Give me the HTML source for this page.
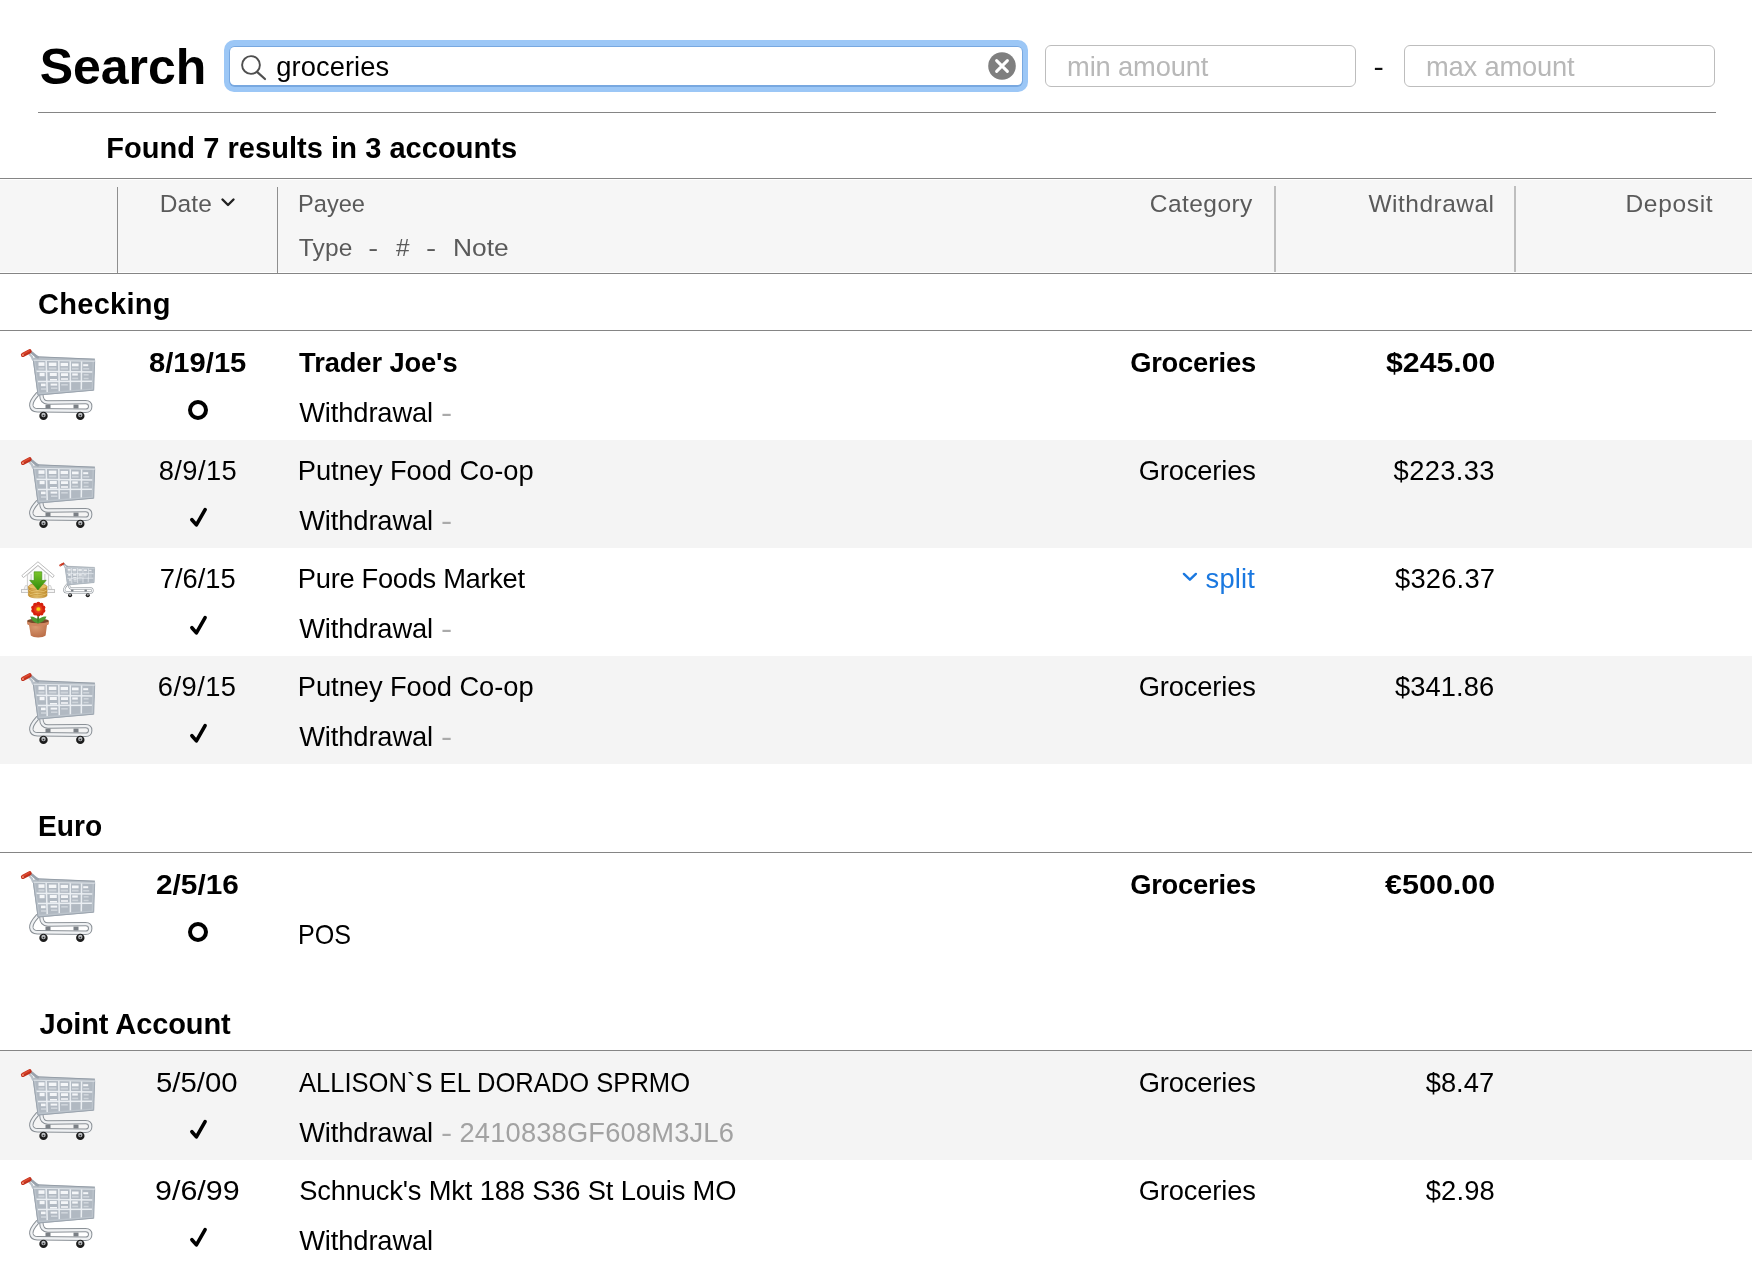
<!DOCTYPE html>
<html><head><meta charset="utf-8"><title>Search</title>
<style>
html,body{margin:0;padding:0;background:#fff;}
body{width:1752px;height:1288px;position:relative;overflow:hidden;font-family:"Liberation Sans",sans-serif;}
.t{position:absolute;white-space:pre;}
.rb{position:absolute;left:0;width:1752px;height:108px;background:#f4f4f4;}
.hl{position:absolute;background:#858585;height:1px;}
.vl{position:absolute;}
.ic{position:absolute;overflow:visible;}
#w{position:absolute;left:0;top:0;width:1752px;height:1288px;will-change:transform;}
</style></head><body><div id="w">
<div class="rb" style="top:440px;height:108px"></div>
<div class="rb" style="top:656px;height:108px"></div>
<div class="rb" style="top:1051px;height:109px"></div>

<!-- search field -->
<div style="position:absolute;left:224px;top:40px;width:804px;height:52px;border-radius:10px;background:#9cc7f6;"></div>
<div style="position:absolute;left:229px;top:45.5px;width:794px;height:41px;border-radius:6px;background:#78a8e0;"></div>
<div style="position:absolute;left:230.2px;top:46.7px;width:791.4px;height:38.7px;border-radius:4.5px;background:#fff;"></div>
<svg style="position:absolute;left:236px;top:50px" width="34" height="34" viewBox="0 0 34 34"><circle cx="15" cy="15" r="8.9" fill="none" stroke="#4f4f4f" stroke-width="1.9"/><path d="M21.6 22.4 L29 29" stroke="#4f4f4f" stroke-width="2.2" stroke-linecap="round"/></svg>
<svg style="position:absolute;left:988px;top:52px" width="28" height="28" viewBox="0 0 28 28"><circle cx="14" cy="14" r="13.8" fill="#7f7f7f"/><path d="M8.6 8.6 L19.4 19.4 M19.4 8.6 L8.6 19.4" stroke="#fff" stroke-width="3" stroke-linecap="round"/></svg>
<div style="position:absolute;left:1045px;top:45px;width:309px;height:40px;border:1px solid #bdbdbd;border-radius:6px;background:#fff;"></div>
<div style="position:absolute;left:1404px;top:45px;width:309px;height:40px;border:1px solid #bdbdbd;border-radius:6px;background:#fff;"></div>
<div class="hl" style="left:38px;top:112px;width:1678px;"></div>
<!-- table header -->
<div style="position:absolute;left:0;top:180px;width:1752px;height:92px;background:#f6f6f6;"></div>
<div class="hl" style="left:0;top:178px;width:1752px;"></div>
<div class="hl" style="left:0;top:273px;width:1752px;"></div>
<div class="vl" style="left:117px;top:186.5px;width:1px;height:86.5px;background:#8f8f8f;"></div>
<div class="vl" style="left:277px;top:186.5px;width:1px;height:86.5px;background:#8f8f8f;"></div>
<div class="vl" style="left:1274px;top:186px;width:2px;height:86px;background:#bebebe;"></div>
<div class="vl" style="left:1514px;top:186px;width:2px;height:86px;background:#bebebe;"></div>
<svg style="position:absolute;left:217.5px;top:195px" width="20" height="16" viewBox="0 0 20 16"><path d="M4.5 4.5 L10 10 L15.5 4.5" fill="none" stroke="#222" stroke-width="2.4" stroke-linecap="round" stroke-linejoin="round"/></svg>
<!-- section lines -->
<div class="hl" style="left:0;top:330px;width:1752px;"></div>
<div class="hl" style="left:0;top:852px;width:1752px;"></div>
<div class="hl" style="left:0;top:1050px;width:1752px;"></div>
<span class="t" style="left:39.82px;top:37.00px;font-size:50px;line-height:60px;letter-spacing:-0.075px;color:#000;font-weight:bold;">Search</span>
<span class="t" style="left:276.35px;top:50.00px;font-size:27.3px;line-height:33px;letter-spacing:0.066px;color:#000;">groceries</span>
<span class="t" style="left:1067.09px;top:50.00px;font-size:27.3px;line-height:33px;letter-spacing:-0.147px;color:#b8b8b8;">min amount</span>
<span class="t" style="left:1425.99px;top:50.00px;font-size:27.3px;line-height:33px;letter-spacing:-0.167px;color:#b8b8b8;">max amount</span>
<span class="t" style="left:1374.43px;top:50.00px;font-size:27.3px;line-height:33px;letter-spacing:0.000px;color:#111;transform:scaleX(1.131);">-</span>
<span class="t" style="left:106.19px;top:131.00px;font-size:29px;line-height:35px;letter-spacing:0.060px;color:#000;font-weight:bold;">Found 7 results in 3 accounts</span>
<span class="t" style="left:159.70px;top:189.00px;font-size:24.5px;line-height:29px;letter-spacing:0.125px;color:#5a5a5a;">Date</span>
<span class="t" style="left:297.87px;top:189.00px;font-size:24.5px;line-height:29px;letter-spacing:0.000px;color:#5a5a5a;transform-origin:0 0;transform:scaleX(0.9647);">Payee</span>
<span class="t" style="left:298.70px;top:233.00px;font-size:24.5px;line-height:29px;letter-spacing:0.170px;color:#5a5a5a;">Type</span>
<span class="t" style="left:368.86px;top:233.00px;font-size:24.5px;line-height:29px;letter-spacing:0.000px;color:#5a5a5a;transform:scaleX(1.213);">-</span>
<span class="t" style="left:396.15px;top:233.00px;font-size:24.5px;line-height:29px;letter-spacing:0.000px;color:#5a5a5a;transform:scaleX(0.993);">#</span>
<span class="t" style="left:426.56px;top:233.00px;font-size:24.5px;line-height:29px;letter-spacing:0.000px;color:#5a5a5a;transform:scaleX(1.246);">-</span>
<span class="t" style="left:452.65px;top:233.00px;font-size:24.5px;line-height:29px;letter-spacing:0.000px;color:#5a5a5a;transform-origin:0 0;transform:scaleX(1.0754);">Note</span>
<span class="t" style="left:1149.80px;top:189.00px;font-size:24.5px;line-height:29px;letter-spacing:0.448px;color:#5a5a5a;">Category</span>
<span class="t" style="left:1368.40px;top:189.00px;font-size:24.5px;line-height:29px;letter-spacing:0.497px;color:#5a5a5a;">Withdrawal</span>
<span class="t" style="left:1625.50px;top:189.00px;font-size:24.5px;line-height:29px;letter-spacing:0.673px;color:#5a5a5a;">Deposit</span>
<span class="t" style="left:38.09px;top:287.00px;font-size:29px;line-height:35px;letter-spacing:0.276px;color:#000;font-weight:bold;">Checking</span>
<span class="t" style="left:37.84px;top:809.00px;font-size:29px;line-height:35px;letter-spacing:0.000px;color:#000;font-weight:bold;transform-origin:0 0;transform:scaleX(0.9700);">Euro</span>
<span class="t" style="left:39.60px;top:1007.00px;font-size:29px;line-height:35px;letter-spacing:-0.091px;color:#000;font-weight:bold;">Joint Account</span>
<span class="t" style="left:148.59px;top:346.00px;font-size:27.3px;line-height:33px;letter-spacing:0.000px;color:#000;font-weight:bold;transform-origin:0 0;transform:scaleX(1.0687);">8/19/15</span>
<span class="t" style="left:299.10px;top:346.00px;font-size:27.3px;line-height:33px;letter-spacing:-0.105px;color:#000;font-weight:bold;">Trader Joe's</span>
<span class="t" style="left:299.20px;top:396.00px;font-size:27.3px;line-height:33px;letter-spacing:-0.113px;color:#000;">Withdrawal</span>
<span class="t" style="left:441.69px;top:396.00px;font-size:27.3px;line-height:33px;letter-spacing:0.000px;color:#aaaaaa;transform:scaleX(1.227);">-</span>
<span class="t" style="left:1130.15px;top:346.00px;font-size:27.3px;line-height:33px;letter-spacing:-0.190px;color:#000;font-weight:bold;">Groceries</span>
<span class="t" style="left:1385.70px;top:346.00px;font-size:27.3px;line-height:33px;letter-spacing:0.000px;color:#000;font-weight:bold;transform-origin:0 0;transform:scaleX(1.1079);">$245.00</span>
<span class="t" style="left:158.65px;top:454.00px;font-size:27.3px;line-height:33px;letter-spacing:0.432px;color:#000;">8/9/15</span>
<span class="t" style="left:297.87px;top:454.00px;font-size:27.3px;line-height:33px;letter-spacing:-0.063px;color:#000;">Putney Food Co-op</span>
<span class="t" style="left:299.20px;top:504.00px;font-size:27.3px;line-height:33px;letter-spacing:-0.113px;color:#000;">Withdrawal</span>
<span class="t" style="left:441.69px;top:504.00px;font-size:27.3px;line-height:33px;letter-spacing:0.000px;color:#aaaaaa;transform:scaleX(1.227);">-</span>
<span class="t" style="left:1138.72px;top:454.00px;font-size:27.3px;line-height:33px;letter-spacing:-0.150px;color:#000;">Groceries</span>
<span class="t" style="left:1393.60px;top:454.00px;font-size:27.3px;line-height:33px;letter-spacing:0.354px;color:#000;">$223.33</span>
<span class="t" style="left:159.72px;top:562.00px;font-size:27.3px;line-height:33px;letter-spacing:0.017px;color:#000;">7/6/15</span>
<span class="t" style="left:297.87px;top:562.00px;font-size:27.3px;line-height:33px;letter-spacing:-0.306px;color:#000;">Pure Foods Market</span>
<span class="t" style="left:299.20px;top:612.00px;font-size:27.3px;line-height:33px;letter-spacing:-0.113px;color:#000;">Withdrawal</span>
<span class="t" style="left:441.69px;top:612.00px;font-size:27.3px;line-height:33px;letter-spacing:0.000px;color:#aaaaaa;transform:scaleX(1.227);">-</span>
<span class="t" style="left:1205.57px;top:562.00px;font-size:27.3px;line-height:33px;letter-spacing:0.196px;color:#1a78e0;">split</span>
<span class="t" style="left:1395.00px;top:562.00px;font-size:27.3px;line-height:33px;letter-spacing:0.221px;color:#000;">$326.37</span>
<span class="t" style="left:157.82px;top:670.00px;font-size:27.3px;line-height:33px;letter-spacing:0.457px;color:#000;">6/9/15</span>
<span class="t" style="left:297.87px;top:670.00px;font-size:27.3px;line-height:33px;letter-spacing:-0.063px;color:#000;">Putney Food Co-op</span>
<span class="t" style="left:299.20px;top:720.00px;font-size:27.3px;line-height:33px;letter-spacing:-0.113px;color:#000;">Withdrawal</span>
<span class="t" style="left:441.69px;top:720.00px;font-size:27.3px;line-height:33px;letter-spacing:0.000px;color:#aaaaaa;transform:scaleX(1.227);">-</span>
<span class="t" style="left:1138.72px;top:670.00px;font-size:27.3px;line-height:33px;letter-spacing:-0.150px;color:#000;">Groceries</span>
<span class="t" style="left:1395.00px;top:670.00px;font-size:27.3px;line-height:33px;letter-spacing:0.071px;color:#000;">$341.86</span>
<span class="t" style="left:155.97px;top:868.00px;font-size:27.3px;line-height:33px;letter-spacing:0.000px;color:#000;font-weight:bold;transform-origin:0 0;transform:scaleX(1.0905);">2/5/16</span>
<span class="t" style="left:297.54px;top:918.00px;font-size:27.3px;line-height:33px;letter-spacing:0.000px;color:#000;transform-origin:0 0;transform:scaleX(0.9196);">POS</span>
<span class="t" style="left:1130.15px;top:868.00px;font-size:27.3px;line-height:33px;letter-spacing:-0.190px;color:#000;font-weight:bold;">Groceries</span>
<span class="t" style="left:1385.20px;top:868.00px;font-size:27.3px;line-height:33px;letter-spacing:0.000px;color:#000;font-weight:bold;transform-origin:0 0;transform:scaleX(1.1171);">€500.00</span>
<span class="t" style="left:155.58px;top:1066.00px;font-size:27.3px;line-height:33px;letter-spacing:0.000px;color:#000;transform-origin:0 0;transform:scaleX(1.0757);">5/5/00</span>
<span class="t" style="left:299.40px;top:1066.00px;font-size:27.3px;line-height:33px;letter-spacing:0.000px;color:#000;transform-origin:0 0;transform:scaleX(0.9363);">ALLISON`S EL DORADO SPRMO</span>
<span class="t" style="left:299.20px;top:1116.00px;font-size:27.3px;line-height:33px;letter-spacing:-0.113px;color:#000;">Withdrawal</span>
<span class="t" style="left:459.52px;top:1116.00px;font-size:27.3px;line-height:33px;letter-spacing:0.169px;color:#a2a2a2;">2410838GF608M3JL6</span>
<span class="t" style="left:441.69px;top:1116.00px;font-size:27.3px;line-height:33px;letter-spacing:0.000px;color:#aaaaaa;transform:scaleX(1.227);">-</span>
<span class="t" style="left:1138.72px;top:1066.00px;font-size:27.3px;line-height:33px;letter-spacing:-0.150px;color:#000;">Groceries</span>
<span class="t" style="left:1425.70px;top:1066.00px;font-size:27.3px;line-height:33px;letter-spacing:0.022px;color:#000;">$8.47</span>
<span class="t" style="left:155.07px;top:1174.00px;font-size:27.3px;line-height:33px;letter-spacing:0.000px;color:#000;transform-origin:0 0;transform:scaleX(1.1154);">9/6/99</span>
<span class="t" style="left:299.15px;top:1174.00px;font-size:27.3px;line-height:33px;letter-spacing:-0.152px;color:#000;">Schnuck's Mkt 188 S36 St Louis MO</span>
<span class="t" style="left:299.20px;top:1224.00px;font-size:27.3px;line-height:33px;letter-spacing:-0.113px;color:#000;">Withdrawal</span>
<span class="t" style="left:1138.72px;top:1174.00px;font-size:27.3px;line-height:33px;letter-spacing:-0.150px;color:#000;">Groceries</span>
<span class="t" style="left:1425.70px;top:1174.00px;font-size:27.3px;line-height:33px;letter-spacing:0.172px;color:#000;">$2.98</span>
<svg class="ic" style="left:186px;top:398.3px" width="24" height="24" viewBox="0 0 24 24"><circle cx="12" cy="12" r="8" fill="none" stroke="#000" stroke-width="4"/></svg>
<svg class="ic" style="left:186px;top:504px" width="24" height="26" viewBox="0 0 24 26"><path d="M5.9 15.7 L10.4 20.9 L19.1 5.6" fill="none" stroke="#000" stroke-width="3.6" stroke-linecap="round" stroke-linejoin="round"/></svg>
<svg class="ic" style="left:186px;top:612px" width="24" height="26" viewBox="0 0 24 26"><path d="M5.9 15.7 L10.4 20.9 L19.1 5.6" fill="none" stroke="#000" stroke-width="3.6" stroke-linecap="round" stroke-linejoin="round"/></svg>
<svg class="ic" style="left:1178px;top:568px" width="24" height="16" viewBox="0 0 24 16"><path d="M5.9 5.9 L11.9 11.7 L17.9 5.9" fill="none" stroke="#1a78e0" stroke-width="2.4" stroke-linecap="round" stroke-linejoin="round"/></svg>
<svg class="ic" style="left:186px;top:720px" width="24" height="26" viewBox="0 0 24 26"><path d="M5.9 15.7 L10.4 20.9 L19.1 5.6" fill="none" stroke="#000" stroke-width="3.6" stroke-linecap="round" stroke-linejoin="round"/></svg>
<svg class="ic" style="left:186px;top:920.3px" width="24" height="24" viewBox="0 0 24 24"><circle cx="12" cy="12" r="8" fill="none" stroke="#000" stroke-width="4"/></svg>
<svg class="ic" style="left:186px;top:1116px" width="24" height="26" viewBox="0 0 24 26"><path d="M5.9 15.7 L10.4 20.9 L19.1 5.6" fill="none" stroke="#000" stroke-width="3.6" stroke-linecap="round" stroke-linejoin="round"/></svg>
<svg class="ic" style="left:186px;top:1224px" width="24" height="26" viewBox="0 0 24 26"><path d="M5.9 15.7 L10.4 20.9 L19.1 5.6" fill="none" stroke="#000" stroke-width="3.6" stroke-linecap="round" stroke-linejoin="round"/></svg>
<svg class="ic" style="left:10px;top:340px" width="100" height="90" viewBox="0 0 100 90" preserveAspectRatio="none">
  <!-- lower frame tube -->
  <path d="M27.6 54 C23.4 58.5 21 62 21.3 65.4 C21.7 69 24 70.1 27.4 70.2 L75.6 70.7 C79 70.7 80.2 68.8 80.2 66.4 C80.2 63.9 78.7 62.1 75.6 62.1 L38 62.5 C33.6 62.5 31.4 60 31.3 54.5" fill="none" stroke="#8a9096" stroke-width="4.4" stroke-linecap="round" stroke-linejoin="round"/>
  <path d="M27.6 54 C23.4 58.5 21 62 21.3 65.4 C21.7 69 24 70.1 27.4 70.2 L75.6 70.7 C79 70.7 80.2 68.8 80.2 66.4 C80.2 63.9 78.7 62.1 75.6 62.1 L38 62.5 C33.6 62.5 31.4 60 31.3 54.5" fill="none" stroke="#eff1f3" stroke-width="2.4" stroke-linecap="round" stroke-linejoin="round"/>
  <rect x="35.5" y="64.6" width="5" height="3.8" fill="#7b8086"/>
  <rect x="63.5" y="64.6" width="5" height="3.8" fill="#7b8086"/>
  <!-- wheels -->
  <circle cx="33.5" cy="75.9" r="4.2" fill="#1c1c1c"/>
  <circle cx="33.5" cy="75" r="2.2" fill="#b9bcc0"/>
  <circle cx="33.5" cy="75.6" r="0.9" fill="#333"/>
  <circle cx="70.3" cy="75.9" r="4.2" fill="#1c1c1c"/>
  <circle cx="70.3" cy="75" r="2.2" fill="#b9bcc0"/>
  <circle cx="70.3" cy="75.6" r="0.9" fill="#333"/>
  <!-- basket body -->
  <path d="M22.6 18.5 L84.9 20.2 L83.6 50.4 L27.8 55.4 Z" fill="#b1b9c2"/>
  <!-- cell highlights -->
  <g fill="#f4f6f8">
   <rect x="28.5" y="22.3" width="6" height="3.6"/><rect x="38.8" y="22.6" width="7.6" height="3.4"/><rect x="50.6" y="22.9" width="7.4" height="3.2"/><rect x="62" y="23.5" width="6.6" height="2.8"/><rect x="73.2" y="24.2" width="5" height="2"/>
   <rect x="29.6" y="32.8" width="5" height="3.4"/><rect x="39.8" y="33" width="7" height="3"/><rect x="51" y="33.2" width="7" height="2.8"/><rect x="62.2" y="33.4" width="5.6" height="2.2"/>
   <rect x="40" y="39" width="7" height="1.6"/><rect x="51" y="38.2" width="7" height="1.6"/>
   <rect x="31" y="43.6" width="4.6" height="2.6"/><rect x="40.6" y="43.6" width="6.6" height="2"/>
  </g>
  <g fill="#cfd5db">
   <rect x="28.5" y="27.4" width="6" height="2"/><rect x="38.8" y="27.4" width="7.6" height="2"/><rect x="50.6" y="27.6" width="7.4" height="2"/><rect x="62" y="27.8" width="6.6" height="1.8"/><rect x="73.2" y="28" width="6" height="1.6"/>
   <rect x="62.2" y="37.6" width="6" height="1.6"/><rect x="73.6" y="34" width="5" height="1.6"/><rect x="73.6" y="37.8" width="5" height="1.4"/>
   <rect x="51.2" y="44" width="6.6" height="1.6"/><rect x="31" y="48.2" width="5" height="1.6"/><rect x="41" y="47.4" width="6.4" height="1.6"/>
  </g>
  <!-- grid lines -->
  <g stroke="#eaeef2" stroke-width="1.5" fill="none">
   <path d="M36.1 19.5 L37.3 54"/><path d="M48.8 19.8 L49.3 53"/><path d="M60.3 20.1 L60.4 52"/><path d="M71.6 20.4 L71.3 51"/>
   <path d="M24.6 31.2 L84.2 32"/><path d="M26 41.6 L83.8 41.2"/>
  </g>
  <!-- basket border -->
  <path d="M24.2 20.5 L28.6 53.8 L82.6 49.4 L83.6 21.6" fill="none" stroke="#bcc4cc" stroke-width="2"/>
  <path d="M23.2 19 L28 55 L83.4 50.2" fill="none" stroke="#9aa3ad" stroke-width="1"/>
  <path d="M84.6 20.5 L83.6 50.4" fill="none" stroke="#a4adb7" stroke-width="1.2"/>
  <!-- top rim -->
  <path d="M27.6 16.4 L84.9 18.8 L84.9 21.4 L23.2 20.6 L22.6 18.2 Z" fill="#b5bdc5"/>
  <path d="M27.6 16.8 L84.9 19.2" stroke="#9099a3" stroke-width="0.9" fill="none"/>
  <path d="M23.4 20.3 L84.6 21.2" stroke="#dfe4e9" stroke-width="1.1" fill="none"/>
  <!-- handle connector -->
  <path d="M20.6 12 C23.5 13.2 24.6 16 27.8 17.2" fill="none" stroke="#9aa3ad" stroke-width="2.6" stroke-linecap="round"/>
  <path d="M19.6 14.4 C21.6 15.6 22.4 17.6 23 19.6" fill="none" stroke="#b8c0c8" stroke-width="2.2" stroke-linecap="round"/>
  <!-- red handle -->
  <path d="M13 14.9 L19.6 11.3" stroke="#c0301c" stroke-width="4.2" stroke-linecap="round" fill="none"/>
  <path d="M13.2 13.9 L19.2 10.7" stroke="#dc4a30" stroke-width="1.6" stroke-linecap="round" fill="none"/>
  <circle cx="12.9" cy="15" r="1.1" fill="#f08a70"/>
</svg>
<svg class="ic" style="left:10px;top:448px" width="100" height="90" viewBox="0 0 100 90" preserveAspectRatio="none">
  <!-- lower frame tube -->
  <path d="M27.6 54 C23.4 58.5 21 62 21.3 65.4 C21.7 69 24 70.1 27.4 70.2 L75.6 70.7 C79 70.7 80.2 68.8 80.2 66.4 C80.2 63.9 78.7 62.1 75.6 62.1 L38 62.5 C33.6 62.5 31.4 60 31.3 54.5" fill="none" stroke="#8a9096" stroke-width="4.4" stroke-linecap="round" stroke-linejoin="round"/>
  <path d="M27.6 54 C23.4 58.5 21 62 21.3 65.4 C21.7 69 24 70.1 27.4 70.2 L75.6 70.7 C79 70.7 80.2 68.8 80.2 66.4 C80.2 63.9 78.7 62.1 75.6 62.1 L38 62.5 C33.6 62.5 31.4 60 31.3 54.5" fill="none" stroke="#eff1f3" stroke-width="2.4" stroke-linecap="round" stroke-linejoin="round"/>
  <rect x="35.5" y="64.6" width="5" height="3.8" fill="#7b8086"/>
  <rect x="63.5" y="64.6" width="5" height="3.8" fill="#7b8086"/>
  <!-- wheels -->
  <circle cx="33.5" cy="75.9" r="4.2" fill="#1c1c1c"/>
  <circle cx="33.5" cy="75" r="2.2" fill="#b9bcc0"/>
  <circle cx="33.5" cy="75.6" r="0.9" fill="#333"/>
  <circle cx="70.3" cy="75.9" r="4.2" fill="#1c1c1c"/>
  <circle cx="70.3" cy="75" r="2.2" fill="#b9bcc0"/>
  <circle cx="70.3" cy="75.6" r="0.9" fill="#333"/>
  <!-- basket body -->
  <path d="M22.6 18.5 L84.9 20.2 L83.6 50.4 L27.8 55.4 Z" fill="#b1b9c2"/>
  <!-- cell highlights -->
  <g fill="#f4f6f8">
   <rect x="28.5" y="22.3" width="6" height="3.6"/><rect x="38.8" y="22.6" width="7.6" height="3.4"/><rect x="50.6" y="22.9" width="7.4" height="3.2"/><rect x="62" y="23.5" width="6.6" height="2.8"/><rect x="73.2" y="24.2" width="5" height="2"/>
   <rect x="29.6" y="32.8" width="5" height="3.4"/><rect x="39.8" y="33" width="7" height="3"/><rect x="51" y="33.2" width="7" height="2.8"/><rect x="62.2" y="33.4" width="5.6" height="2.2"/>
   <rect x="40" y="39" width="7" height="1.6"/><rect x="51" y="38.2" width="7" height="1.6"/>
   <rect x="31" y="43.6" width="4.6" height="2.6"/><rect x="40.6" y="43.6" width="6.6" height="2"/>
  </g>
  <g fill="#cfd5db">
   <rect x="28.5" y="27.4" width="6" height="2"/><rect x="38.8" y="27.4" width="7.6" height="2"/><rect x="50.6" y="27.6" width="7.4" height="2"/><rect x="62" y="27.8" width="6.6" height="1.8"/><rect x="73.2" y="28" width="6" height="1.6"/>
   <rect x="62.2" y="37.6" width="6" height="1.6"/><rect x="73.6" y="34" width="5" height="1.6"/><rect x="73.6" y="37.8" width="5" height="1.4"/>
   <rect x="51.2" y="44" width="6.6" height="1.6"/><rect x="31" y="48.2" width="5" height="1.6"/><rect x="41" y="47.4" width="6.4" height="1.6"/>
  </g>
  <!-- grid lines -->
  <g stroke="#eaeef2" stroke-width="1.5" fill="none">
   <path d="M36.1 19.5 L37.3 54"/><path d="M48.8 19.8 L49.3 53"/><path d="M60.3 20.1 L60.4 52"/><path d="M71.6 20.4 L71.3 51"/>
   <path d="M24.6 31.2 L84.2 32"/><path d="M26 41.6 L83.8 41.2"/>
  </g>
  <!-- basket border -->
  <path d="M24.2 20.5 L28.6 53.8 L82.6 49.4 L83.6 21.6" fill="none" stroke="#bcc4cc" stroke-width="2"/>
  <path d="M23.2 19 L28 55 L83.4 50.2" fill="none" stroke="#9aa3ad" stroke-width="1"/>
  <path d="M84.6 20.5 L83.6 50.4" fill="none" stroke="#a4adb7" stroke-width="1.2"/>
  <!-- top rim -->
  <path d="M27.6 16.4 L84.9 18.8 L84.9 21.4 L23.2 20.6 L22.6 18.2 Z" fill="#b5bdc5"/>
  <path d="M27.6 16.8 L84.9 19.2" stroke="#9099a3" stroke-width="0.9" fill="none"/>
  <path d="M23.4 20.3 L84.6 21.2" stroke="#dfe4e9" stroke-width="1.1" fill="none"/>
  <!-- handle connector -->
  <path d="M20.6 12 C23.5 13.2 24.6 16 27.8 17.2" fill="none" stroke="#9aa3ad" stroke-width="2.6" stroke-linecap="round"/>
  <path d="M19.6 14.4 C21.6 15.6 22.4 17.6 23 19.6" fill="none" stroke="#b8c0c8" stroke-width="2.2" stroke-linecap="round"/>
  <!-- red handle -->
  <path d="M13 14.9 L19.6 11.3" stroke="#c0301c" stroke-width="4.2" stroke-linecap="round" fill="none"/>
  <path d="M13.2 13.9 L19.2 10.7" stroke="#dc4a30" stroke-width="1.6" stroke-linecap="round" fill="none"/>
  <circle cx="12.9" cy="15" r="1.1" fill="#f08a70"/>
</svg>

<svg class="ic" style="left:10px;top:555px" width="100" height="90" viewBox="0 0 100 90">
  <defs>
    <linearGradient id="ga" x1="0" y1="0" x2="0" y2="1"><stop offset="0" stop-color="#7cc62a"/><stop offset="1" stop-color="#2f8a0c"/></linearGradient>
    <linearGradient id="gc" x1="0" y1="0" x2="1" y2="0"><stop offset="0" stop-color="#c8922e"/><stop offset="0.45" stop-color="#f0d58a"/><stop offset="1" stop-color="#c08a2a"/></linearGradient>
    <radialGradient id="gp" cx="0.4" cy="0.35" r="0.8"><stop offset="0" stop-color="#d99a72"/><stop offset="1" stop-color="#b5653f"/></radialGradient>
  </defs>
  <!-- house body -->
  <path d="M17.4 20 L27.95 10.5 L38.6 20 L38.6 35 L17.4 35 Z" fill="#fbfbfb" stroke="#c9c9c9" stroke-width="0.9"/>
  <rect x="20.4" y="19" width="1.6" height="12" fill="#dcdcdc"/><rect x="34" y="19" width="1.6" height="12" fill="#dcdcdc"/>
  <!-- steps/base -->
  <path d="M14 34.4 L15.4 30.6 L17.4 30.6 L17.4 34.4 Z M42 34.4 L40.6 30.6 L38.6 30.6 L38.6 34.4 Z" fill="#f4f4f4" stroke="#c4c4c4" stroke-width="0.7"/>
  <rect x="11.6" y="34.4" width="32.8" height="3.2" fill="#f6f6f6" stroke="#b9b9b9" stroke-width="0.8"/>
  <!-- roof -->
  <path d="M11.8 20.6 L27.95 6.8 L44.2 20.6 L42.6 22.6 L27.95 10.4 L13.4 22.6 Z" fill="#ffffff" stroke="#b4b4b4" stroke-width="0.9" stroke-linejoin="round"/>
  <!-- coins -->
  <g stroke="#b98526" stroke-width="0.6">
   <path d="M18.4 38.6 L18.4 40.4 A9.3 2.6 0 0 0 37 40.4 L37 38.6 Z" fill="url(#gc)"/>
   <ellipse cx="27.7" cy="38.6" rx="9.3" ry="2.6" fill="#e9c672"/>
   <path d="M18.4 35.2 L18.4 37 A9.3 2.6 0 0 0 37 37 L37 35.2 Z" fill="url(#gc)"/>
   <ellipse cx="27.7" cy="35.2" rx="9.3" ry="2.6" fill="#e9c672"/>
   <path d="M18.4 31.6 L18.4 33.4 A9.3 2.8 0 0 0 37 33.4 L37 31.6 Z" fill="url(#gc)"/>
   <ellipse cx="27.7" cy="31.6" rx="9.3" ry="2.8" fill="#e6bf64"/>
  </g>
  <!-- arrow -->
  <path d="M24.1 16.8 L31.8 16.8 L31.8 25.6 L36.2 25.2 L27.95 35 L19.7 25.2 L24.1 25.6 Z" fill="url(#ga)" stroke="#3a8c12" stroke-width="0.6" stroke-linejoin="round"/>
  <!-- flower pot -->
  <path d="M17.2 66 L38.8 66 L38.4 69.4 L37 70 L35.6 80.6 C33 83.2 23.4 83.2 20.8 80.6 L19 70 L17.6 69.4 Z" fill="url(#gp)"/>
  <ellipse cx="28" cy="66" rx="10.9" ry="2.6" fill="#7a4a2c"/>
  <path d="M17.1 66 A10.9 2.6 0 0 0 38.9 66 L38.5 69 A10.6 2.6 0 0 1 17.5 69 Z" fill="#cf8660"/>
  <!-- leaves -->
  <path d="M28 68.6 C24 67.6 21 65 20.4 61.6 C24 61.6 27 63.4 28 66 C29 63.4 32.4 61.4 36.4 61.6 C35.6 65 32 67.8 28 68.6 Z" fill="#4c9a32"/>
  <path d="M28 68.4 C26.8 66 27 63 28.2 60.8 C29.6 63 29.4 66 28 68.4 Z" fill="#3c8426"/>
  <rect x="27.6" y="58" width="1" height="6" fill="#3c8426"/>
  <!-- flower -->
  <g fill="#d6200c">
   <circle cx="28.3" cy="54.2" r="6"/>
   <circle cx="28.3" cy="48.9" r="2.1"/><circle cx="31.4" cy="49.9" r="2.1"/><circle cx="33.3" cy="52.6" r="2.1"/><circle cx="33.3" cy="55.8" r="2.1"/><circle cx="31.4" cy="58.5" r="2.1"/>
   <circle cx="28.3" cy="59.5" r="2.1"/><circle cx="25.2" cy="58.5" r="2.1"/><circle cx="23.3" cy="55.8" r="2.1"/><circle cx="23.3" cy="52.6" r="2.1"/><circle cx="25.2" cy="49.9" r="2.1"/>
  </g>
  <circle cx="28.3" cy="54.2" r="4.3" fill="#e4351a"/>
  <circle cx="28.4" cy="54.2" r="2.4" fill="#e88a10"/>
  <circle cx="28.4" cy="54.1" r="1.7" fill="#fad414"/>
</svg>

<svg class="ic" style="left:54.45px;top:557.8px" width="48" height="44.1" viewBox="0 0 100 90" preserveAspectRatio="none">
  <!-- lower frame tube -->
  <path d="M27.6 54 C23.4 58.5 21 62 21.3 65.4 C21.7 69 24 70.1 27.4 70.2 L75.6 70.7 C79 70.7 80.2 68.8 80.2 66.4 C80.2 63.9 78.7 62.1 75.6 62.1 L38 62.5 C33.6 62.5 31.4 60 31.3 54.5" fill="none" stroke="#8a9096" stroke-width="4.4" stroke-linecap="round" stroke-linejoin="round"/>
  <path d="M27.6 54 C23.4 58.5 21 62 21.3 65.4 C21.7 69 24 70.1 27.4 70.2 L75.6 70.7 C79 70.7 80.2 68.8 80.2 66.4 C80.2 63.9 78.7 62.1 75.6 62.1 L38 62.5 C33.6 62.5 31.4 60 31.3 54.5" fill="none" stroke="#eff1f3" stroke-width="2.4" stroke-linecap="round" stroke-linejoin="round"/>
  <rect x="35.5" y="64.6" width="5" height="3.8" fill="#7b8086"/>
  <rect x="63.5" y="64.6" width="5" height="3.8" fill="#7b8086"/>
  <!-- wheels -->
  <circle cx="33.5" cy="75.9" r="4.2" fill="#1c1c1c"/>
  <circle cx="33.5" cy="75" r="2.2" fill="#b9bcc0"/>
  <circle cx="33.5" cy="75.6" r="0.9" fill="#333"/>
  <circle cx="70.3" cy="75.9" r="4.2" fill="#1c1c1c"/>
  <circle cx="70.3" cy="75" r="2.2" fill="#b9bcc0"/>
  <circle cx="70.3" cy="75.6" r="0.9" fill="#333"/>
  <!-- basket body -->
  <path d="M22.6 18.5 L84.9 20.2 L83.6 50.4 L27.8 55.4 Z" fill="#b1b9c2"/>
  <!-- cell highlights -->
  <g fill="#f4f6f8">
   <rect x="28.5" y="22.3" width="6" height="3.6"/><rect x="38.8" y="22.6" width="7.6" height="3.4"/><rect x="50.6" y="22.9" width="7.4" height="3.2"/><rect x="62" y="23.5" width="6.6" height="2.8"/><rect x="73.2" y="24.2" width="5" height="2"/>
   <rect x="29.6" y="32.8" width="5" height="3.4"/><rect x="39.8" y="33" width="7" height="3"/><rect x="51" y="33.2" width="7" height="2.8"/><rect x="62.2" y="33.4" width="5.6" height="2.2"/>
   <rect x="40" y="39" width="7" height="1.6"/><rect x="51" y="38.2" width="7" height="1.6"/>
   <rect x="31" y="43.6" width="4.6" height="2.6"/><rect x="40.6" y="43.6" width="6.6" height="2"/>
  </g>
  <g fill="#cfd5db">
   <rect x="28.5" y="27.4" width="6" height="2"/><rect x="38.8" y="27.4" width="7.6" height="2"/><rect x="50.6" y="27.6" width="7.4" height="2"/><rect x="62" y="27.8" width="6.6" height="1.8"/><rect x="73.2" y="28" width="6" height="1.6"/>
   <rect x="62.2" y="37.6" width="6" height="1.6"/><rect x="73.6" y="34" width="5" height="1.6"/><rect x="73.6" y="37.8" width="5" height="1.4"/>
   <rect x="51.2" y="44" width="6.6" height="1.6"/><rect x="31" y="48.2" width="5" height="1.6"/><rect x="41" y="47.4" width="6.4" height="1.6"/>
  </g>
  <!-- grid lines -->
  <g stroke="#eaeef2" stroke-width="1.5" fill="none">
   <path d="M36.1 19.5 L37.3 54"/><path d="M48.8 19.8 L49.3 53"/><path d="M60.3 20.1 L60.4 52"/><path d="M71.6 20.4 L71.3 51"/>
   <path d="M24.6 31.2 L84.2 32"/><path d="M26 41.6 L83.8 41.2"/>
  </g>
  <!-- basket border -->
  <path d="M24.2 20.5 L28.6 53.8 L82.6 49.4 L83.6 21.6" fill="none" stroke="#bcc4cc" stroke-width="2"/>
  <path d="M23.2 19 L28 55 L83.4 50.2" fill="none" stroke="#9aa3ad" stroke-width="1"/>
  <path d="M84.6 20.5 L83.6 50.4" fill="none" stroke="#a4adb7" stroke-width="1.2"/>
  <!-- top rim -->
  <path d="M27.6 16.4 L84.9 18.8 L84.9 21.4 L23.2 20.6 L22.6 18.2 Z" fill="#b5bdc5"/>
  <path d="M27.6 16.8 L84.9 19.2" stroke="#9099a3" stroke-width="0.9" fill="none"/>
  <path d="M23.4 20.3 L84.6 21.2" stroke="#dfe4e9" stroke-width="1.1" fill="none"/>
  <!-- handle connector -->
  <path d="M20.6 12 C23.5 13.2 24.6 16 27.8 17.2" fill="none" stroke="#9aa3ad" stroke-width="2.6" stroke-linecap="round"/>
  <path d="M19.6 14.4 C21.6 15.6 22.4 17.6 23 19.6" fill="none" stroke="#b8c0c8" stroke-width="2.2" stroke-linecap="round"/>
  <!-- red handle -->
  <path d="M13 14.9 L19.6 11.3" stroke="#c0301c" stroke-width="4.2" stroke-linecap="round" fill="none"/>
  <path d="M13.2 13.9 L19.2 10.7" stroke="#dc4a30" stroke-width="1.6" stroke-linecap="round" fill="none"/>
  <circle cx="12.9" cy="15" r="1.1" fill="#f08a70"/>
</svg>
<svg class="ic" style="left:10px;top:664px" width="100" height="90" viewBox="0 0 100 90" preserveAspectRatio="none">
  <!-- lower frame tube -->
  <path d="M27.6 54 C23.4 58.5 21 62 21.3 65.4 C21.7 69 24 70.1 27.4 70.2 L75.6 70.7 C79 70.7 80.2 68.8 80.2 66.4 C80.2 63.9 78.7 62.1 75.6 62.1 L38 62.5 C33.6 62.5 31.4 60 31.3 54.5" fill="none" stroke="#8a9096" stroke-width="4.4" stroke-linecap="round" stroke-linejoin="round"/>
  <path d="M27.6 54 C23.4 58.5 21 62 21.3 65.4 C21.7 69 24 70.1 27.4 70.2 L75.6 70.7 C79 70.7 80.2 68.8 80.2 66.4 C80.2 63.9 78.7 62.1 75.6 62.1 L38 62.5 C33.6 62.5 31.4 60 31.3 54.5" fill="none" stroke="#eff1f3" stroke-width="2.4" stroke-linecap="round" stroke-linejoin="round"/>
  <rect x="35.5" y="64.6" width="5" height="3.8" fill="#7b8086"/>
  <rect x="63.5" y="64.6" width="5" height="3.8" fill="#7b8086"/>
  <!-- wheels -->
  <circle cx="33.5" cy="75.9" r="4.2" fill="#1c1c1c"/>
  <circle cx="33.5" cy="75" r="2.2" fill="#b9bcc0"/>
  <circle cx="33.5" cy="75.6" r="0.9" fill="#333"/>
  <circle cx="70.3" cy="75.9" r="4.2" fill="#1c1c1c"/>
  <circle cx="70.3" cy="75" r="2.2" fill="#b9bcc0"/>
  <circle cx="70.3" cy="75.6" r="0.9" fill="#333"/>
  <!-- basket body -->
  <path d="M22.6 18.5 L84.9 20.2 L83.6 50.4 L27.8 55.4 Z" fill="#b1b9c2"/>
  <!-- cell highlights -->
  <g fill="#f4f6f8">
   <rect x="28.5" y="22.3" width="6" height="3.6"/><rect x="38.8" y="22.6" width="7.6" height="3.4"/><rect x="50.6" y="22.9" width="7.4" height="3.2"/><rect x="62" y="23.5" width="6.6" height="2.8"/><rect x="73.2" y="24.2" width="5" height="2"/>
   <rect x="29.6" y="32.8" width="5" height="3.4"/><rect x="39.8" y="33" width="7" height="3"/><rect x="51" y="33.2" width="7" height="2.8"/><rect x="62.2" y="33.4" width="5.6" height="2.2"/>
   <rect x="40" y="39" width="7" height="1.6"/><rect x="51" y="38.2" width="7" height="1.6"/>
   <rect x="31" y="43.6" width="4.6" height="2.6"/><rect x="40.6" y="43.6" width="6.6" height="2"/>
  </g>
  <g fill="#cfd5db">
   <rect x="28.5" y="27.4" width="6" height="2"/><rect x="38.8" y="27.4" width="7.6" height="2"/><rect x="50.6" y="27.6" width="7.4" height="2"/><rect x="62" y="27.8" width="6.6" height="1.8"/><rect x="73.2" y="28" width="6" height="1.6"/>
   <rect x="62.2" y="37.6" width="6" height="1.6"/><rect x="73.6" y="34" width="5" height="1.6"/><rect x="73.6" y="37.8" width="5" height="1.4"/>
   <rect x="51.2" y="44" width="6.6" height="1.6"/><rect x="31" y="48.2" width="5" height="1.6"/><rect x="41" y="47.4" width="6.4" height="1.6"/>
  </g>
  <!-- grid lines -->
  <g stroke="#eaeef2" stroke-width="1.5" fill="none">
   <path d="M36.1 19.5 L37.3 54"/><path d="M48.8 19.8 L49.3 53"/><path d="M60.3 20.1 L60.4 52"/><path d="M71.6 20.4 L71.3 51"/>
   <path d="M24.6 31.2 L84.2 32"/><path d="M26 41.6 L83.8 41.2"/>
  </g>
  <!-- basket border -->
  <path d="M24.2 20.5 L28.6 53.8 L82.6 49.4 L83.6 21.6" fill="none" stroke="#bcc4cc" stroke-width="2"/>
  <path d="M23.2 19 L28 55 L83.4 50.2" fill="none" stroke="#9aa3ad" stroke-width="1"/>
  <path d="M84.6 20.5 L83.6 50.4" fill="none" stroke="#a4adb7" stroke-width="1.2"/>
  <!-- top rim -->
  <path d="M27.6 16.4 L84.9 18.8 L84.9 21.4 L23.2 20.6 L22.6 18.2 Z" fill="#b5bdc5"/>
  <path d="M27.6 16.8 L84.9 19.2" stroke="#9099a3" stroke-width="0.9" fill="none"/>
  <path d="M23.4 20.3 L84.6 21.2" stroke="#dfe4e9" stroke-width="1.1" fill="none"/>
  <!-- handle connector -->
  <path d="M20.6 12 C23.5 13.2 24.6 16 27.8 17.2" fill="none" stroke="#9aa3ad" stroke-width="2.6" stroke-linecap="round"/>
  <path d="M19.6 14.4 C21.6 15.6 22.4 17.6 23 19.6" fill="none" stroke="#b8c0c8" stroke-width="2.2" stroke-linecap="round"/>
  <!-- red handle -->
  <path d="M13 14.9 L19.6 11.3" stroke="#c0301c" stroke-width="4.2" stroke-linecap="round" fill="none"/>
  <path d="M13.2 13.9 L19.2 10.7" stroke="#dc4a30" stroke-width="1.6" stroke-linecap="round" fill="none"/>
  <circle cx="12.9" cy="15" r="1.1" fill="#f08a70"/>
</svg>
<svg class="ic" style="left:10px;top:862px" width="100" height="90" viewBox="0 0 100 90" preserveAspectRatio="none">
  <!-- lower frame tube -->
  <path d="M27.6 54 C23.4 58.5 21 62 21.3 65.4 C21.7 69 24 70.1 27.4 70.2 L75.6 70.7 C79 70.7 80.2 68.8 80.2 66.4 C80.2 63.9 78.7 62.1 75.6 62.1 L38 62.5 C33.6 62.5 31.4 60 31.3 54.5" fill="none" stroke="#8a9096" stroke-width="4.4" stroke-linecap="round" stroke-linejoin="round"/>
  <path d="M27.6 54 C23.4 58.5 21 62 21.3 65.4 C21.7 69 24 70.1 27.4 70.2 L75.6 70.7 C79 70.7 80.2 68.8 80.2 66.4 C80.2 63.9 78.7 62.1 75.6 62.1 L38 62.5 C33.6 62.5 31.4 60 31.3 54.5" fill="none" stroke="#eff1f3" stroke-width="2.4" stroke-linecap="round" stroke-linejoin="round"/>
  <rect x="35.5" y="64.6" width="5" height="3.8" fill="#7b8086"/>
  <rect x="63.5" y="64.6" width="5" height="3.8" fill="#7b8086"/>
  <!-- wheels -->
  <circle cx="33.5" cy="75.9" r="4.2" fill="#1c1c1c"/>
  <circle cx="33.5" cy="75" r="2.2" fill="#b9bcc0"/>
  <circle cx="33.5" cy="75.6" r="0.9" fill="#333"/>
  <circle cx="70.3" cy="75.9" r="4.2" fill="#1c1c1c"/>
  <circle cx="70.3" cy="75" r="2.2" fill="#b9bcc0"/>
  <circle cx="70.3" cy="75.6" r="0.9" fill="#333"/>
  <!-- basket body -->
  <path d="M22.6 18.5 L84.9 20.2 L83.6 50.4 L27.8 55.4 Z" fill="#b1b9c2"/>
  <!-- cell highlights -->
  <g fill="#f4f6f8">
   <rect x="28.5" y="22.3" width="6" height="3.6"/><rect x="38.8" y="22.6" width="7.6" height="3.4"/><rect x="50.6" y="22.9" width="7.4" height="3.2"/><rect x="62" y="23.5" width="6.6" height="2.8"/><rect x="73.2" y="24.2" width="5" height="2"/>
   <rect x="29.6" y="32.8" width="5" height="3.4"/><rect x="39.8" y="33" width="7" height="3"/><rect x="51" y="33.2" width="7" height="2.8"/><rect x="62.2" y="33.4" width="5.6" height="2.2"/>
   <rect x="40" y="39" width="7" height="1.6"/><rect x="51" y="38.2" width="7" height="1.6"/>
   <rect x="31" y="43.6" width="4.6" height="2.6"/><rect x="40.6" y="43.6" width="6.6" height="2"/>
  </g>
  <g fill="#cfd5db">
   <rect x="28.5" y="27.4" width="6" height="2"/><rect x="38.8" y="27.4" width="7.6" height="2"/><rect x="50.6" y="27.6" width="7.4" height="2"/><rect x="62" y="27.8" width="6.6" height="1.8"/><rect x="73.2" y="28" width="6" height="1.6"/>
   <rect x="62.2" y="37.6" width="6" height="1.6"/><rect x="73.6" y="34" width="5" height="1.6"/><rect x="73.6" y="37.8" width="5" height="1.4"/>
   <rect x="51.2" y="44" width="6.6" height="1.6"/><rect x="31" y="48.2" width="5" height="1.6"/><rect x="41" y="47.4" width="6.4" height="1.6"/>
  </g>
  <!-- grid lines -->
  <g stroke="#eaeef2" stroke-width="1.5" fill="none">
   <path d="M36.1 19.5 L37.3 54"/><path d="M48.8 19.8 L49.3 53"/><path d="M60.3 20.1 L60.4 52"/><path d="M71.6 20.4 L71.3 51"/>
   <path d="M24.6 31.2 L84.2 32"/><path d="M26 41.6 L83.8 41.2"/>
  </g>
  <!-- basket border -->
  <path d="M24.2 20.5 L28.6 53.8 L82.6 49.4 L83.6 21.6" fill="none" stroke="#bcc4cc" stroke-width="2"/>
  <path d="M23.2 19 L28 55 L83.4 50.2" fill="none" stroke="#9aa3ad" stroke-width="1"/>
  <path d="M84.6 20.5 L83.6 50.4" fill="none" stroke="#a4adb7" stroke-width="1.2"/>
  <!-- top rim -->
  <path d="M27.6 16.4 L84.9 18.8 L84.9 21.4 L23.2 20.6 L22.6 18.2 Z" fill="#b5bdc5"/>
  <path d="M27.6 16.8 L84.9 19.2" stroke="#9099a3" stroke-width="0.9" fill="none"/>
  <path d="M23.4 20.3 L84.6 21.2" stroke="#dfe4e9" stroke-width="1.1" fill="none"/>
  <!-- handle connector -->
  <path d="M20.6 12 C23.5 13.2 24.6 16 27.8 17.2" fill="none" stroke="#9aa3ad" stroke-width="2.6" stroke-linecap="round"/>
  <path d="M19.6 14.4 C21.6 15.6 22.4 17.6 23 19.6" fill="none" stroke="#b8c0c8" stroke-width="2.2" stroke-linecap="round"/>
  <!-- red handle -->
  <path d="M13 14.9 L19.6 11.3" stroke="#c0301c" stroke-width="4.2" stroke-linecap="round" fill="none"/>
  <path d="M13.2 13.9 L19.2 10.7" stroke="#dc4a30" stroke-width="1.6" stroke-linecap="round" fill="none"/>
  <circle cx="12.9" cy="15" r="1.1" fill="#f08a70"/>
</svg>
<svg class="ic" style="left:10px;top:1060px" width="100" height="90" viewBox="0 0 100 90" preserveAspectRatio="none">
  <!-- lower frame tube -->
  <path d="M27.6 54 C23.4 58.5 21 62 21.3 65.4 C21.7 69 24 70.1 27.4 70.2 L75.6 70.7 C79 70.7 80.2 68.8 80.2 66.4 C80.2 63.9 78.7 62.1 75.6 62.1 L38 62.5 C33.6 62.5 31.4 60 31.3 54.5" fill="none" stroke="#8a9096" stroke-width="4.4" stroke-linecap="round" stroke-linejoin="round"/>
  <path d="M27.6 54 C23.4 58.5 21 62 21.3 65.4 C21.7 69 24 70.1 27.4 70.2 L75.6 70.7 C79 70.7 80.2 68.8 80.2 66.4 C80.2 63.9 78.7 62.1 75.6 62.1 L38 62.5 C33.6 62.5 31.4 60 31.3 54.5" fill="none" stroke="#eff1f3" stroke-width="2.4" stroke-linecap="round" stroke-linejoin="round"/>
  <rect x="35.5" y="64.6" width="5" height="3.8" fill="#7b8086"/>
  <rect x="63.5" y="64.6" width="5" height="3.8" fill="#7b8086"/>
  <!-- wheels -->
  <circle cx="33.5" cy="75.9" r="4.2" fill="#1c1c1c"/>
  <circle cx="33.5" cy="75" r="2.2" fill="#b9bcc0"/>
  <circle cx="33.5" cy="75.6" r="0.9" fill="#333"/>
  <circle cx="70.3" cy="75.9" r="4.2" fill="#1c1c1c"/>
  <circle cx="70.3" cy="75" r="2.2" fill="#b9bcc0"/>
  <circle cx="70.3" cy="75.6" r="0.9" fill="#333"/>
  <!-- basket body -->
  <path d="M22.6 18.5 L84.9 20.2 L83.6 50.4 L27.8 55.4 Z" fill="#b1b9c2"/>
  <!-- cell highlights -->
  <g fill="#f4f6f8">
   <rect x="28.5" y="22.3" width="6" height="3.6"/><rect x="38.8" y="22.6" width="7.6" height="3.4"/><rect x="50.6" y="22.9" width="7.4" height="3.2"/><rect x="62" y="23.5" width="6.6" height="2.8"/><rect x="73.2" y="24.2" width="5" height="2"/>
   <rect x="29.6" y="32.8" width="5" height="3.4"/><rect x="39.8" y="33" width="7" height="3"/><rect x="51" y="33.2" width="7" height="2.8"/><rect x="62.2" y="33.4" width="5.6" height="2.2"/>
   <rect x="40" y="39" width="7" height="1.6"/><rect x="51" y="38.2" width="7" height="1.6"/>
   <rect x="31" y="43.6" width="4.6" height="2.6"/><rect x="40.6" y="43.6" width="6.6" height="2"/>
  </g>
  <g fill="#cfd5db">
   <rect x="28.5" y="27.4" width="6" height="2"/><rect x="38.8" y="27.4" width="7.6" height="2"/><rect x="50.6" y="27.6" width="7.4" height="2"/><rect x="62" y="27.8" width="6.6" height="1.8"/><rect x="73.2" y="28" width="6" height="1.6"/>
   <rect x="62.2" y="37.6" width="6" height="1.6"/><rect x="73.6" y="34" width="5" height="1.6"/><rect x="73.6" y="37.8" width="5" height="1.4"/>
   <rect x="51.2" y="44" width="6.6" height="1.6"/><rect x="31" y="48.2" width="5" height="1.6"/><rect x="41" y="47.4" width="6.4" height="1.6"/>
  </g>
  <!-- grid lines -->
  <g stroke="#eaeef2" stroke-width="1.5" fill="none">
   <path d="M36.1 19.5 L37.3 54"/><path d="M48.8 19.8 L49.3 53"/><path d="M60.3 20.1 L60.4 52"/><path d="M71.6 20.4 L71.3 51"/>
   <path d="M24.6 31.2 L84.2 32"/><path d="M26 41.6 L83.8 41.2"/>
  </g>
  <!-- basket border -->
  <path d="M24.2 20.5 L28.6 53.8 L82.6 49.4 L83.6 21.6" fill="none" stroke="#bcc4cc" stroke-width="2"/>
  <path d="M23.2 19 L28 55 L83.4 50.2" fill="none" stroke="#9aa3ad" stroke-width="1"/>
  <path d="M84.6 20.5 L83.6 50.4" fill="none" stroke="#a4adb7" stroke-width="1.2"/>
  <!-- top rim -->
  <path d="M27.6 16.4 L84.9 18.8 L84.9 21.4 L23.2 20.6 L22.6 18.2 Z" fill="#b5bdc5"/>
  <path d="M27.6 16.8 L84.9 19.2" stroke="#9099a3" stroke-width="0.9" fill="none"/>
  <path d="M23.4 20.3 L84.6 21.2" stroke="#dfe4e9" stroke-width="1.1" fill="none"/>
  <!-- handle connector -->
  <path d="M20.6 12 C23.5 13.2 24.6 16 27.8 17.2" fill="none" stroke="#9aa3ad" stroke-width="2.6" stroke-linecap="round"/>
  <path d="M19.6 14.4 C21.6 15.6 22.4 17.6 23 19.6" fill="none" stroke="#b8c0c8" stroke-width="2.2" stroke-linecap="round"/>
  <!-- red handle -->
  <path d="M13 14.9 L19.6 11.3" stroke="#c0301c" stroke-width="4.2" stroke-linecap="round" fill="none"/>
  <path d="M13.2 13.9 L19.2 10.7" stroke="#dc4a30" stroke-width="1.6" stroke-linecap="round" fill="none"/>
  <circle cx="12.9" cy="15" r="1.1" fill="#f08a70"/>
</svg>
<svg class="ic" style="left:10px;top:1168px" width="100" height="90" viewBox="0 0 100 90" preserveAspectRatio="none">
  <!-- lower frame tube -->
  <path d="M27.6 54 C23.4 58.5 21 62 21.3 65.4 C21.7 69 24 70.1 27.4 70.2 L75.6 70.7 C79 70.7 80.2 68.8 80.2 66.4 C80.2 63.9 78.7 62.1 75.6 62.1 L38 62.5 C33.6 62.5 31.4 60 31.3 54.5" fill="none" stroke="#8a9096" stroke-width="4.4" stroke-linecap="round" stroke-linejoin="round"/>
  <path d="M27.6 54 C23.4 58.5 21 62 21.3 65.4 C21.7 69 24 70.1 27.4 70.2 L75.6 70.7 C79 70.7 80.2 68.8 80.2 66.4 C80.2 63.9 78.7 62.1 75.6 62.1 L38 62.5 C33.6 62.5 31.4 60 31.3 54.5" fill="none" stroke="#eff1f3" stroke-width="2.4" stroke-linecap="round" stroke-linejoin="round"/>
  <rect x="35.5" y="64.6" width="5" height="3.8" fill="#7b8086"/>
  <rect x="63.5" y="64.6" width="5" height="3.8" fill="#7b8086"/>
  <!-- wheels -->
  <circle cx="33.5" cy="75.9" r="4.2" fill="#1c1c1c"/>
  <circle cx="33.5" cy="75" r="2.2" fill="#b9bcc0"/>
  <circle cx="33.5" cy="75.6" r="0.9" fill="#333"/>
  <circle cx="70.3" cy="75.9" r="4.2" fill="#1c1c1c"/>
  <circle cx="70.3" cy="75" r="2.2" fill="#b9bcc0"/>
  <circle cx="70.3" cy="75.6" r="0.9" fill="#333"/>
  <!-- basket body -->
  <path d="M22.6 18.5 L84.9 20.2 L83.6 50.4 L27.8 55.4 Z" fill="#b1b9c2"/>
  <!-- cell highlights -->
  <g fill="#f4f6f8">
   <rect x="28.5" y="22.3" width="6" height="3.6"/><rect x="38.8" y="22.6" width="7.6" height="3.4"/><rect x="50.6" y="22.9" width="7.4" height="3.2"/><rect x="62" y="23.5" width="6.6" height="2.8"/><rect x="73.2" y="24.2" width="5" height="2"/>
   <rect x="29.6" y="32.8" width="5" height="3.4"/><rect x="39.8" y="33" width="7" height="3"/><rect x="51" y="33.2" width="7" height="2.8"/><rect x="62.2" y="33.4" width="5.6" height="2.2"/>
   <rect x="40" y="39" width="7" height="1.6"/><rect x="51" y="38.2" width="7" height="1.6"/>
   <rect x="31" y="43.6" width="4.6" height="2.6"/><rect x="40.6" y="43.6" width="6.6" height="2"/>
  </g>
  <g fill="#cfd5db">
   <rect x="28.5" y="27.4" width="6" height="2"/><rect x="38.8" y="27.4" width="7.6" height="2"/><rect x="50.6" y="27.6" width="7.4" height="2"/><rect x="62" y="27.8" width="6.6" height="1.8"/><rect x="73.2" y="28" width="6" height="1.6"/>
   <rect x="62.2" y="37.6" width="6" height="1.6"/><rect x="73.6" y="34" width="5" height="1.6"/><rect x="73.6" y="37.8" width="5" height="1.4"/>
   <rect x="51.2" y="44" width="6.6" height="1.6"/><rect x="31" y="48.2" width="5" height="1.6"/><rect x="41" y="47.4" width="6.4" height="1.6"/>
  </g>
  <!-- grid lines -->
  <g stroke="#eaeef2" stroke-width="1.5" fill="none">
   <path d="M36.1 19.5 L37.3 54"/><path d="M48.8 19.8 L49.3 53"/><path d="M60.3 20.1 L60.4 52"/><path d="M71.6 20.4 L71.3 51"/>
   <path d="M24.6 31.2 L84.2 32"/><path d="M26 41.6 L83.8 41.2"/>
  </g>
  <!-- basket border -->
  <path d="M24.2 20.5 L28.6 53.8 L82.6 49.4 L83.6 21.6" fill="none" stroke="#bcc4cc" stroke-width="2"/>
  <path d="M23.2 19 L28 55 L83.4 50.2" fill="none" stroke="#9aa3ad" stroke-width="1"/>
  <path d="M84.6 20.5 L83.6 50.4" fill="none" stroke="#a4adb7" stroke-width="1.2"/>
  <!-- top rim -->
  <path d="M27.6 16.4 L84.9 18.8 L84.9 21.4 L23.2 20.6 L22.6 18.2 Z" fill="#b5bdc5"/>
  <path d="M27.6 16.8 L84.9 19.2" stroke="#9099a3" stroke-width="0.9" fill="none"/>
  <path d="M23.4 20.3 L84.6 21.2" stroke="#dfe4e9" stroke-width="1.1" fill="none"/>
  <!-- handle connector -->
  <path d="M20.6 12 C23.5 13.2 24.6 16 27.8 17.2" fill="none" stroke="#9aa3ad" stroke-width="2.6" stroke-linecap="round"/>
  <path d="M19.6 14.4 C21.6 15.6 22.4 17.6 23 19.6" fill="none" stroke="#b8c0c8" stroke-width="2.2" stroke-linecap="round"/>
  <!-- red handle -->
  <path d="M13 14.9 L19.6 11.3" stroke="#c0301c" stroke-width="4.2" stroke-linecap="round" fill="none"/>
  <path d="M13.2 13.9 L19.2 10.7" stroke="#dc4a30" stroke-width="1.6" stroke-linecap="round" fill="none"/>
  <circle cx="12.9" cy="15" r="1.1" fill="#f08a70"/>
</svg>
</div></body></html>
